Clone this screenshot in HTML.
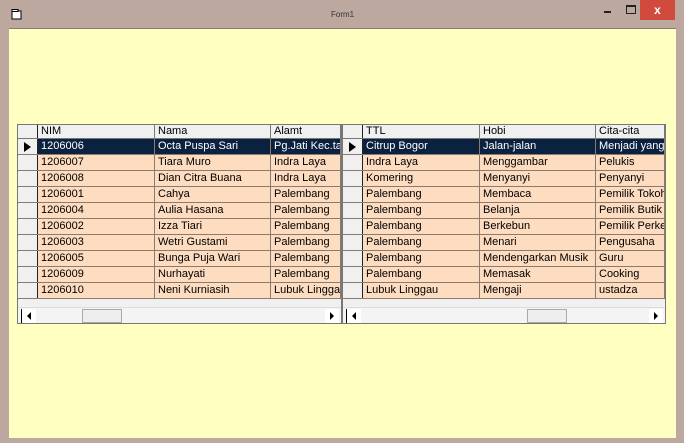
<!DOCTYPE html><html><head><style>
body{margin:0;width:684px;height:443px;overflow:hidden;background:#bca89f;font-family:"Liberation Sans",sans-serif;font-size:11px;position:relative}
.t{position:absolute;left:0;top:0;width:684px;height:28px}
.client{position:absolute;left:9px;top:28px;width:667px;height:409px;background:#ffffc2;border-top:1px solid #8a7a72}
.g{position:absolute;top:124px;height:200px;background:#f0f0f0;border:1px solid #777;box-sizing:border-box;overflow:hidden}
.r{position:absolute;left:0;height:16px;box-sizing:border-box;border-bottom:1px solid #8a7a70}
.c{position:absolute;top:0;height:15px;line-height:15px;padding-left:3px;box-sizing:border-box;border-right:1px solid #8a7a70;white-space:nowrap;overflow:hidden;color:#000}
.ind{background:#f0f0f0;border-right:1px solid #222}
.sb{position:absolute;left:0;right:0;top:182px;height:17px;background:#f4f4f4;border-top:1px solid #ddd}
</style></head><body>
<div class="t">
<svg style="position:absolute;left:11px;top:9px" width="12" height="11"><rect x="1" y="2" width="9" height="8" fill="#fff" stroke="#000"/><rect x="1" y="0.5" width="6" height="2" fill="#fff" stroke="#000"/></svg>
<div style="position:absolute;left:331px;top:10px;font-size:8px;color:#333">Form1</div>
<div style="position:absolute;left:604px;top:11px;width:7px;height:2px;background:#222"></div>
<div style="position:absolute;left:626px;top:5px;width:8px;height:6px;border:1px solid #222;border-top-width:2px"></div>
<div style="position:absolute;left:640px;top:0;width:35px;height:20px;background:#d04a3e;color:#fff;text-align:center;line-height:20px;font-size:12px;font-weight:bold">x</div>
</div>
<div class="client"></div>
<div class="g" style="left:17px;width:325px" id="g1"></div>
<div class="g" style="left:342px;width:324px" id="g2"></div>
<script>
function build(id,cols,rows,thumb){
 var g=document.getElementById(id),h='',x;
 h+='<div class="r" style="top:0;height:14px;width:100%;background:#f0f0f0;border-bottom:1px solid #777">';
 h+='<div class="c ind" style="left:0;width:20px;height:13px"></div>';
 x=20;
 cols.forEach(function(c){h+='<div class="c" style="left:'+x+'px;width:'+c[1]+'px;height:13px;line-height:13px;border-right:1px solid #777">'+c[0]+'</div>';x+=c[1];});
 h+='</div>';
 rows.forEach(function(r,i){
  var sel=i==0,bg=sel?'#0b2140':'#fddcbf',fg=sel?'#fff':'#000';
  h+='<div class="r" style="top:'+(14+i*16)+'px;width:100%;background:#f0f0f0">';
  h+='<div class="c ind" style="left:0;width:20px">'+(sel?'<svg width="14" height="14" style="position:absolute;left:3px;top:1px"><path d="M3 2 L10 7 L3 12Z" fill="#000"/></svg>':'')+'</div>';
  x=20;
  cols.forEach(function(c,j){h+='<div class="c" style="left:'+x+'px;width:'+c[1]+'px;background:'+bg+';color:'+fg+'">'+r[j]+'</div>';x+=c[1];});
  h+='</div>';
 });
 h+='<div class="sb"><div style="position:absolute;left:3px;top:1px;width:14px;height:14px;background:#fff;border-left:1px solid #000"><svg width="14" height="14"><path d="M5 7 L9 3 L9 11Z"/></svg></div>'+
 '<div style="position:absolute;left:'+thumb+'px;top:1px;width:40px;height:14px;background:#eee;border:1px solid #aaa;box-sizing:border-box"></div>'+
 '<div style="position:absolute;right:2px;top:1px;width:14px;height:14px;background:#fff"><svg width="14" height="14"><path d="M9 7 L5 3 L5 11Z"/></svg></div></div>';
 g.innerHTML=h;
}
build('g1',[['NIM',117],['Nama',116],['Alamt',70]],[
['1206006','Octa Puspa Sari','Pg.Jati Kec.tanjung'],['1206007','Tiara Muro','Indra Laya'],['1206008','Dian Citra Buana','Indra Laya'],['1206001','Cahya','Palembang'],['1206004','Aulia Hasana','Palembang'],['1206002','Izza Tiari','Palembang'],['1206003','Wetri Gustami','Palembang'],['1206005','Bunga Puja Wari','Palembang'],['1206009','Nurhayati','Palembang'],['1206010','Neni Kurniasih','Lubuk Linggau']],64);
build('g2',[['TTL',117],['Hobi',116],['Cita-cita',69]],[
['Citrup Bogor','Jalan-jalan','Menjadi yang'],['Indra Laya','Menggambar','Pelukis'],['Komering','Menyanyi','Penyanyi'],['Palembang','Membaca','Pemilik Tokoh'],['Palembang','Belanja','Pemilik Butik'],['Palembang','Berkebun','Pemilik Perkebunan'],['Palembang','Menari','Pengusaha'],['Palembang','Mendengarkan Musik','Guru'],['Palembang','Memasak','Cooking'],['Lubuk Linggau','Mengaji','ustadza']],184);
</script>
</body></html>
